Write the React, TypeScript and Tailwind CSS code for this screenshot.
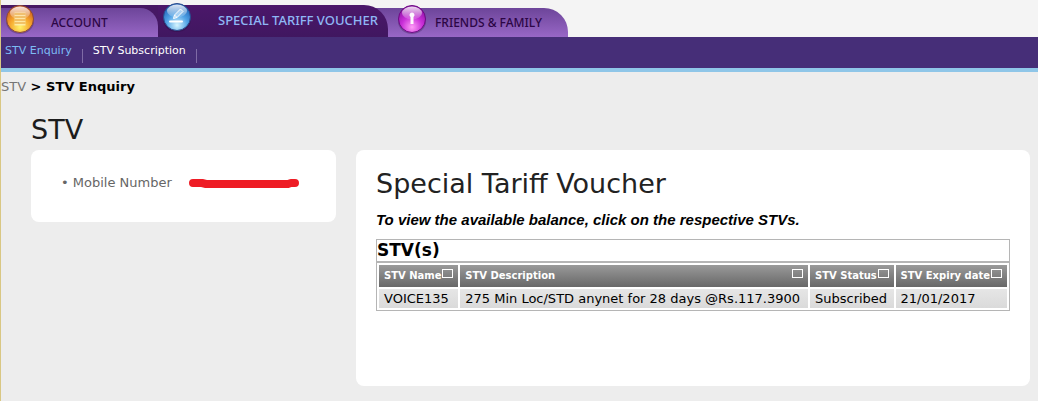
import type { ReactNode } from "react";

const columns = ["STV Name", "STV Description", "STV Status", "STV Expiry date"];

const vouchers = [
  ["VOICE135", "275 Min Loc/STD anynet for 28 days @Rs.117.3900", "Subscribed", "21/01/2017"],
];

type OrbProps = {
  id: string;
  rim: string;
  dark: string;
  mid: string;
  light: string;
  children: ReactNode;
};

function Orb({ id, rim, dark, mid, light, children }: OrbProps) {
  return (
    <svg width="30" height="32" viewBox="0 0 30 32" className="shrink-0" aria-hidden="true">
      <defs>
        <radialGradient id={id} cx="50%" cy="80%" r="78%">
          <stop offset="0" stopColor={light} />
          <stop offset="0.5" stopColor={mid} />
          <stop offset="1" stopColor={dark} />
        </radialGradient>
        <linearGradient id={id + "-shine"} x1="0" y1="0" x2="0" y2="1">
          <stop offset="0" stopColor="#fff" stopOpacity="0.85" />
          <stop offset="1" stopColor="#fff" stopOpacity="0.1" />
        </linearGradient>
      </defs>
      <ellipse cx="15" cy="18" rx="14" ry="13" fill="#1c0930" opacity="0.25" />
      <circle cx="15" cy="16" r="13.5" fill={`url(#${id})`} stroke={rim} strokeWidth="1" />
      <ellipse cx="15" cy="10" rx="10" ry="6.5" fill={`url(#${id}-shine)`} />
      {children}
    </svg>
  );
}

function Divider() {
  return <span className="mt-3 h-3.5 w-px bg-[#7f6ba6]" />;
}

export default function App() {
  return (
    <div className="min-h-screen border-l border-[#d9c783] bg-[#ededed] font-['DejaVu_Sans',Verdana,sans-serif] text-[13px] text-black">
      <header>
        <nav className="flex h-[37px] items-end bg-[#f4f4f4] font-['Noto_Sans',sans-serif] text-[12px] font-medium">
          <div className="h-8 w-[157px] bg-[#461864] pt-[3px]">
            <a
              href="#account"
              className="flex h-[29px] items-center rounded-tr-[18px] bg-linear-to-b from-[#6d459a] to-[#9867c6] pl-1 text-[#2c0645]"
            >
              <span className="-mt-2 mr-4">
                <Orb id="orange" rim="#8a4a3a" dark="#c9551d" mid="#f5a52c" light="#fff36a">
                  <path d="M9.5 9.5h11v13h-11z" fill="#fff6c8" opacity="0.7" />
                  <path d="M9.5 11h11M9.5 14h11M9.5 17h11M9.5 20h11" stroke="#e59a2c" strokeWidth="1" />
                </Orb>
              </span>
              ACCOUNT
            </a>
          </div>
          <a
            href="#stv"
            className="z-10 flex h-8 w-[230px] items-center rounded-tr-[24px] bg-linear-to-b from-[#4b176a] to-[#401760] pl-1 text-[13px] text-[#8fb8f5]"
          >
            <span className="-mt-2 mr-[26px]">
              <Orb id="blue" rim="#2a4b8c" dark="#1c5fb4" mid="#51a3e6" light="#d6f5ff">
                <path d="M11.5 17.5l1-3.5 6-6 2.5 2.5-6 6zM12.5 14l2.5 2.5" fill="#bfe0fa" fillOpacity="0.6" stroke="#fff" strokeWidth="1" />
                <path d="M8 20.5h12" stroke="#fff" strokeWidth="2" strokeLinecap="round" />
              </Orb>
            </span>
            <span className="whitespace-nowrap">SPECIAL TARIFF VOUCHER</span>
          </a>
          <a
            href="#friends"
            className="-ml-6 flex h-[29px] w-[204px] items-center rounded-tr-[24px] bg-linear-to-b from-[#6d459a] to-[#9867c6] pl-[33px] text-[#2c0645]"
          >
            <span className="-mt-2 mr-2">
              <Orb id="magenta" rim="#6c0c83" dark="#8a0fa2" mid="#c92fd8" light="#ff9cf7">
                <path d="M15 9.5a2.5 2.5 0 0 1 1.5 4.5v7h-3v-7A2.5 2.5 0 0 1 15 9.5z" fill="#fff" opacity="0.95" />
              </Orb>
            </span>
            FRIENDS &amp; FAMILY
          </a>
        </nav>
        <nav className="flex h-[35px] items-start gap-[10px] border-b-4 border-[#8fc6e8] bg-[#462e78] pl-1 text-[11px] leading-[27px] text-white">
          <a href="#enquiry" className="text-[#7dbcf5]">STV Enquiry</a>
          <Divider />
          <a href="#subscription">STV Subscription</a>
          <Divider />
        </nav>
      </header>

      <div className="py-1 leading-[22px] font-bold">
        <a href="#stv" className="font-normal text-[#757575]">STV</a> &gt; STV Enquiry
      </div>

      <main className="pr-2 pl-[30px]">
        <h1 className="pt-2 text-[27px] leading-10 text-[#1c1c1c]">STV</h1>
        <div className="flex items-start gap-5">
          <section className="flex h-[72px] w-[305px] shrink-0 items-start gap-4 rounded-lg bg-white px-[30px] py-6 leading-[18px] text-[#666]">
            <span>• Mobile Number</span>
            <svg width="112" height="10" viewBox="0 0 112 10" className="mt-1" role="img" aria-label="Hidden number">
              <path d="M5 5h9l4 1h82l3-1h4" fill="none" stroke="#ee1c25" strokeWidth="8" strokeLinecap="round" strokeLinejoin="round" />
            </svg>
          </section>

          <section className="min-h-[236px] flex-1 rounded-lg bg-white p-5 pt-4">
            <h2 className="text-[27px] leading-9 text-[#222]">Special Tariff Voucher</h2>
            <p className="mt-2 font-['Liberation_Sans',Arial,sans-serif] text-[15px] leading-5 font-bold italic">
              To view the available balance, click on the respective STVs.
            </p>
            <h3 className="mt-[9px] border border-b-0 border-[#b5b5b5] text-[17px] leading-[21px] font-bold">STV(s)</h3>
            <table className="w-full border-separate border-spacing-[2px] border border-t-2 border-[#b5b5b5]">
              <thead>
                <tr>
                  {columns.map((name) => (
                    <th key={name} scope="col" className="h-[22px] bg-linear-to-b from-[#9a9a9a] to-[#686868] p-0 pr-[5px] pl-[5px] text-left text-[10px] text-white">
                      <div className="flex justify-between">
                        <span className="leading-[14px] whitespace-nowrap">{name}</span>
                        <span className="h-[9px] w-[11px] border border-white" />
                      </div>
                    </th>
                  ))}
                </tr>
              </thead>
              <tbody>
                {vouchers.map((row) => (
                  <tr key={row[0]}>
                    {row.map((cell) => (
                      <td key={cell} className="h-[19px] bg-linear-to-b from-[#e6e6e6] to-[#dadada] p-0 px-[5px] leading-[19px] whitespace-nowrap">
                        {cell}
                      </td>
                    ))}
                  </tr>
                ))}
              </tbody>
            </table>
          </section>
        </div>
      </main>
    </div>
  );
}
